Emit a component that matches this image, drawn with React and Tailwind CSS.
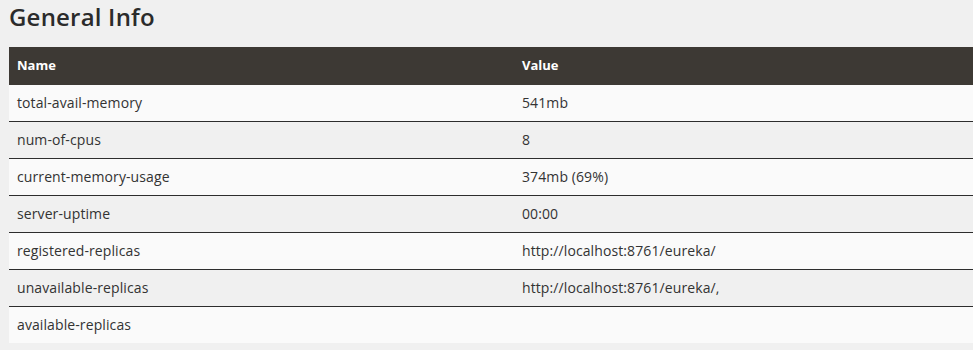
export default function App() {
  const rows = [
    ["total-avail-memory", "541mb"],
    ["num-of-cpus", "8"],
    ["current-memory-usage", "374mb (69%)"],
    ["server-uptime", "00:00"],
    ["registered-replicas", "http://localhost:8761/eureka/"],
    ["unavailable-replicas", "http://localhost:8761/eureka/,"],
    ["available-replicas", ""],
  ];
  return (
    <div className="w-[973px] h-[350px] overflow-hidden bg-[#f0f0f0] pl-[9px] text-[#333333]" style={{ fontFamily: '"Open Sans", sans-serif' }}>
      <div className="h-[47px] pt-[2px]">
        <h1 className="text-[24px] leading-[30px] font-semibold text-[#2b2b2b] tracking-[0.2px]">General Info</h1>
      </div>
      <div className="w-[1010px]">
        <div className="flex h-[38px] items-center bg-[#3d3934] text-white text-[13px] font-bold">
          <div className="w-[505px] pl-[8px]">Name</div>
          <div className="w-[505px] pl-[8px]">Value</div>
        </div>
        {rows.map(([n, v], i) => (
          <div
            key={n}
            className={
              "flex items-center text-[14px] tracking-[0.1px] pb-[1px] " +
              (i % 2 === 0 ? "bg-[#fafafa] " : "bg-[#f0f0f0] ") +
              (i < rows.length - 1 ? "h-[37px] border-b border-[#2d2d2d]" : "h-[36px]")
            }
          >
            <div className="w-[505px] pl-[8px]">{n}</div>
            <div className="w-[505px] pl-[8px]">{v}</div>
          </div>
        ))}
      </div>
    </div>
  );
}
